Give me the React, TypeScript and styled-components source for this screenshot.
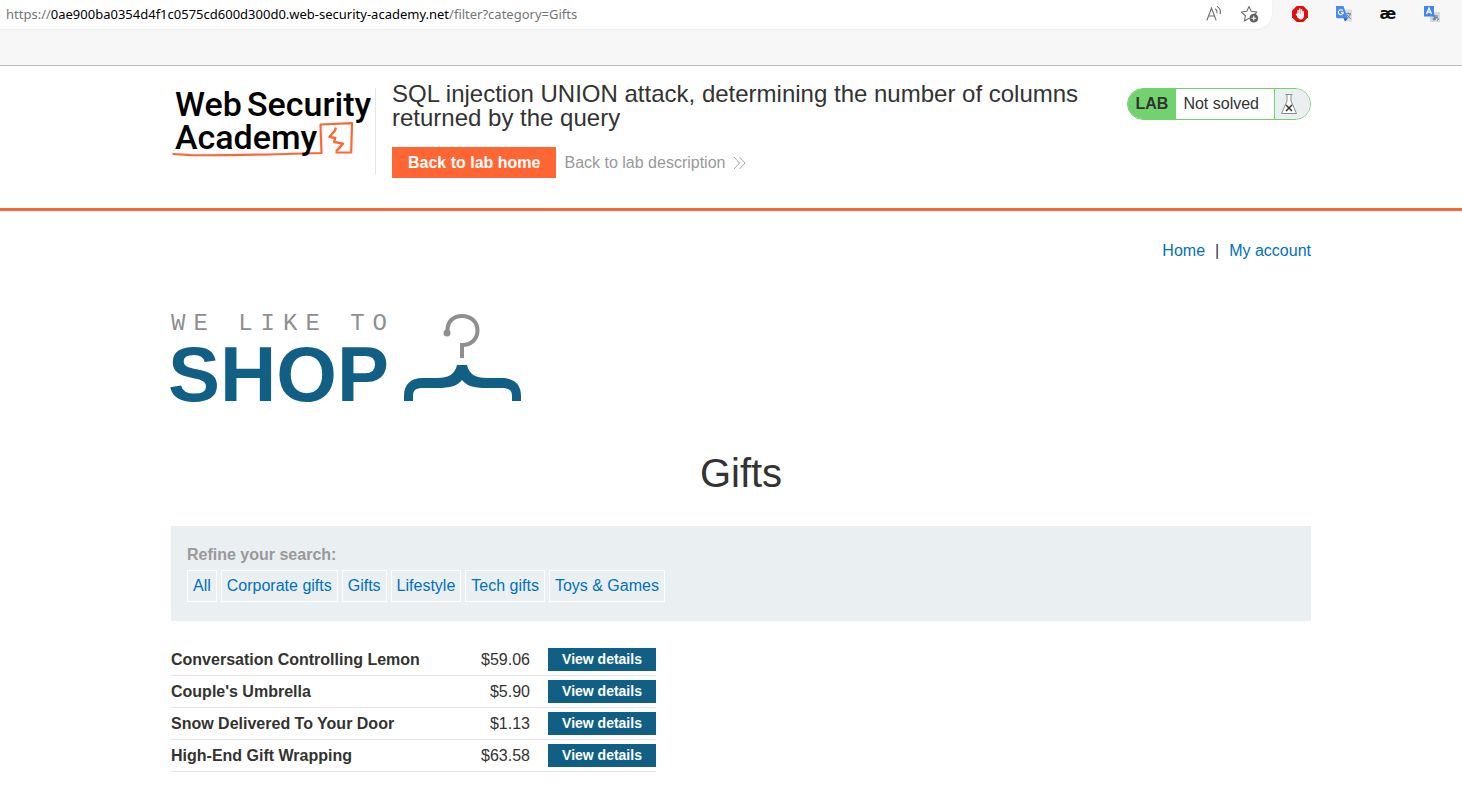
import React from "react";
import styled, { createGlobalStyle } from "styled-components";

const GlobalStyle = createGlobalStyle`
  * { box-sizing: border-box; }
  body {
    margin: 0;
    background: #fff;
    color: #333332;
    font-family: "Liberation Sans", Arial, sans-serif;
    font-size: 16px;
    line-height: 24px;
  }
  a { color: #0071bd; text-decoration: none; }
`;

const Chrome = styled.header`
  height: 66px;
  background: #f7f7f7;
  border-bottom: 1px solid #bdbdbd;
`;

const ChromeRow = styled.div`
  display: flex;
  align-items: stretch;
  height: 29px;
`;

const AddressBar = styled.div`
  flex: 1;
  display: flex;
  align-items: center;
  padding: 0 12px 2px 6px;
  background: #fff;
  border-radius: 0 0 16px 0;
  box-shadow: 0 1px 2px rgba(0, 0, 0, 0.05);
`;

const Url = styled.div`
  flex: 1;
  font-family: "Noto Sans", sans-serif;
  font-size: 13px;
  line-height: 20px;
  color: #757575;
  white-space: nowrap;
`;

const Host = styled.span`
  color: #000;
`;

const IconButton = styled.button`
  display: flex;
  padding: 0;
  border: 0;
  background: none;
`;

const AddressActions = styled.div`
  display: flex;
  gap: 16px;
`;

const Extensions = styled.div`
  display: flex;
  align-items: center;
  gap: 24px;
  padding: 0 20px 2px 18px;
`;

const PageArea = styled.div`
  padding-left: 20px;
`;

const Inner = styled.div`
  max-width: 1140px;
  margin: 0 auto;
`;

const LabHeader = styled(PageArea)`
  border-bottom: 3px solid #ff6633;
`;

const LabHeaderRow = styled(Inner)`
  display: flex;
  align-items: flex-start;
  padding: 16px 0 30px;
`;

const LogoLink = styled.a`
  display: flex;
  margin-top: 6px;
  padding-right: 3px;
  height: 86px;
  border-right: 1px solid #e4e4e4;
`;

const LogoDrawing = styled.svg`
  display: block;
  overflow: visible;
`;

const TitleBlock = styled.div`
  flex: 1;
  padding: 0 48px 0 16px;
`;

const LabTitle = styled.h2`
  margin: 0 0 17px;
  font-size: 24px;
  line-height: 24px;
  font-weight: 400;
`;

const TitleLinks = styled.div`
  display: flex;
  align-items: center;
  gap: 8px;
`;

const HomeButton = styled.a`
  && { color: #fff; }
  padding: 0 16px;
  background: #ff6633;
  font-weight: 700;
  line-height: 31px;
`;

const DescriptionLink = styled.a`
  && { color: #999; }
  display: flex;
  align-items: center;
  gap: 8px;
`;

const LabStatus = styled.div`
  display: flex;
  height: 32px;
  margin-top: 6px;
  overflow: hidden;
  border: 1px solid #72d26e;
  border-radius: 16px;
  line-height: 30px;
`;

const StatusTag = styled.span`
  padding: 0 8px;
  background: #72d26e;
  font-weight: 700;
`;

const StatusText = styled.p`
  margin: 0;
  padding: 0 15px 0 7px;
`;

const StatusIcon = styled.span`
  display: flex;
  align-items: center;
  padding: 0 12px 0 5px;
  border-left: 1px solid #72d26e;
  background: #eaeff2;
`;

const TopNav = styled.nav`
  display: flex;
  justify-content: flex-end;
  gap: 10px;
  padding-top: 28px;
`;

const Banner = styled.div`
  display: flex;
  margin-top: 47px;
`;

const CategoryTitle = styled.h1`
  margin: 43px 0 29px;
  text-align: center;
  font-size: 40px;
  line-height: 48px;
  font-weight: 400;
`;

const Filters = styled.section`
  padding: 17px 16px 19px;
  background: #eaeff2;
`;

const FilterLabel = styled.p`
  margin: 0 0 3px;
  font-weight: 700;
  color: #999;
`;

const FilterList = styled.div`
  display: flex;
  gap: 4px;
`;

const FilterLink = styled.a`
  padding: 0 5px;
  border: 1px solid #fff;
  line-height: 30px;
`;

const Products = styled.table`
  width: 485px;
  margin-top: 23px;
  border-collapse: collapse;
`;

const ProductRow = styled.tr`
  border-bottom: 1px solid #e4e4e4;
`;

const ProductName = styled.th`
  padding: 0;
  text-align: left;
  font-weight: 700;
`;

const ProductPrice = styled.td`
  padding: 0 18px 0 0;
  text-align: right;
`;

const ProductAction = styled.td`
  width: 108px;
  padding: 4px 0;
`;

const DetailsLink = styled.a`
  && { color: #fff; }
  display: block;
  background: #115f84;
  text-align: center;
  font-size: 14px;
  line-height: 23px;
  font-weight: 700;
`;

const categories = ["All", "Corporate gifts", "Gifts", "Lifestyle", "Tech gifts", "Toys & Games"];

const products = [
  { name: "Conversation Controlling Lemon", price: "$59.06" },
  { name: "Couple's Umbrella", price: "$5.90" },
  { name: "Snow Delivered To Your Door", price: "$1.13" },
  { name: "High-End Gift Wrapping", price: "$63.58" },
];

const ReadAloudIcon = () => (
  <svg width="20" height="20" viewBox="0 0 20 20" fill="none" stroke="#6e6e6e" strokeWidth="1.1" strokeLinecap="round">
    <path d="M3 16 L7.5 4 L12 16 M4.6 12 H10.4" />
    <path d="M11.4 5 C12.8 6 13.2 7.4 13 8.8 M13.4 2.6 C16 4.4 16.8 7.2 16.2 9.6" />
  </svg>
);

const FavoriteIcon = () => (
  <svg width="20" height="20" viewBox="0 0 20 20" fill="none">
    <path
      d="M9 2.5 L11.2 7.2 L16.8 8 L15 9.8 M9 2.5 L6.8 7.2 L1.4 8 L5.4 11.8 L4.4 17 L8.6 14.6"
      stroke="#6e6e6e" strokeWidth="1.1" strokeLinejoin="round" strokeLinecap="round"
    />
    <circle cx="13.8" cy="14.2" r="4.4" fill="#5f5f5f" />
    <path d="M13.8 11.8 V16.6 M11.4 14.2 H16.2" stroke="#fff" strokeWidth="1.1" />
  </svg>
);

const BlockerIcon = () => (
  <svg width="20" height="20" viewBox="0 0 20 20">
    <path d="M6.7 2 H13.3 L18 6.7 V13.3 L13.3 18 H6.7 L2 13.3 V6.7 Z" fill="#e40d0d" />
    <g stroke="#fff" strokeWidth="1.4" strokeLinecap="round" fill="none">
      <path d="M8 6.4 V11 M9.8 5 V11 M11.6 5.8 V11 M13.2 7.6 V12 M6.4 10.2 L8.4 13" />
    </g>
    <path d="M7.6 9.6 H13.8 V12 C13.8 14.6 12.4 15.4 10.8 15.4 C9 15.4 8 14.4 7.2 12.6 Z" fill="#fff" />
  </svg>
);

const GoogleTranslateIcon = () => (
  <svg width="20" height="20" viewBox="0 0 20 20">
    <path d="M8 5.5 H18 V17.5 H12 Z" fill="#dadce0" />
    <path d="M12 9.8 H17 M14.4 8.6 V9.8 M16.3 9.8 C15.8 12 14.2 13.5 12.8 14.3 M13.4 11 C14 12.6 15.3 13.8 16.6 14.6" stroke="#5f7f8f" fill="none" />
    <path d="M2 2 H9.5 L13.8 14.2 H3.4 C2.5 14.2 2 13.6 2 12.8 Z" fill="#4a8af4" />
    <path d="M9.5 14.2 H13.8 L11 17.6 Z" fill="#3048b8" />
    <path d="M8.8 6.9 A2.4 2.4 0 1 0 9.2 8.6 H7" stroke="#fff" strokeWidth="1.1" fill="none" />
  </svg>
);

const LigatureMark = styled.span`
  width: 20px;
  text-align: center;
  font-family: "DejaVu Sans", sans-serif;
  font-size: 16px;
  line-height: 20px;
  font-weight: 700;
  color: #111;
`;

const TranslatorIcon = () => (
  <svg width="20" height="20" viewBox="0 0 20 20">
    <rect x="8" y="8" width="10" height="10" fill="#d7dadd" />
    <path d="M10.5 12 H16 M12.8 10.6 V15.6 M15 12.8 C14 15.4 12 16.6 11 15.6 C10.2 14.4 13 13 15.4 13.8 C17 14.6 16.4 16 15 16.6" stroke="#5c7e93" fill="none" />
    <rect x="2" y="2" width="10" height="10.5" fill="#3f86f4" />
    <path d="M4.5 10 L7 4.2 L9.5 10 M5.4 8.2 H8.6" stroke="#fff" strokeWidth="1.3" fill="none" />
  </svg>
);

const AcademyLogo = () => (
  <LogoDrawing width="201" height="86" viewBox="0 0 201 86" role="img" aria-label="Web Security Academy">
    <g fill="none" stroke="#ff6633" strokeLinejoin="round">
      <path d="M1.5 66 L20 67.2 C60 67.6 100 66.5 150.5 65 L149.5 36.5 L181 35.2 L180.2 64.5 L164.5 64.5" strokeWidth="2.2" />
      <path d="M164.8 39.5 L164 42.5 L158.5 48.8 L164.2 50 L163.2 54 L172 55.6 L165 63.5" strokeWidth="2.4" />
    </g>
    <g fill="#000" fontFamily="Roboto, sans-serif" fontSize="34" fontWeight="500">
      <text x="4" y="28">Web</text>
      <text x="76" y="28">Security</text>
      <text x="4" y="61">Academy</text>
    </g>
  </LogoDrawing>
);

const DoubleChevron = () => (
  <svg width="14" height="14" viewBox="0 0 14 14" fill="none" stroke="#a5a5a5">
    <path d="M1 1 L6.5 7 L1 13 M6.5 1 L12 7 L6.5 13" />
  </svg>
);

const FlaskIcon = () => (
  <svg width="18" height="22" viewBox="0 0 18 22" fill="none">
    <path d="M5.5 1.5 H12.5 M7 1.5 V8 L1.5 20.5 H16.5 L11 8 V1.5" fill="#fff" stroke="#8c8c8c" />
    <path d="M6 12 L12 18 M12 12 L6 18" stroke="#333332" strokeWidth="1.5" />
  </svg>
);

const ShopLogo = () => (
  <LogoDrawing width="352" height="96" viewBox="0 0 352 96" role="img" aria-label="We like to shop">
    <text x="0" y="20" fill="#8f8f8f" fontFamily="Liberation Mono, monospace" fontSize="24" letterSpacing="8">WE LIKE TO</text>
    <text x="-3" y="91" fill="#115f84" fontFamily="Liberation Sans, sans-serif" fontSize="78" fontWeight="700">SHOP</text>
    <g fill="none" stroke="#8f8f8f" strokeWidth="4">
      <path d="M276.5 21 C276 11 283 6 291 6 C300 6 306.5 12 306.5 20.5 C306.5 29 300 35 291 35 V48" />
    </g>
    <circle cx="276" cy="23" r="3.5" fill="#8f8f8f" />
    <path
      d="M286 55 H296 C298 64 304 68 316 68 H330 C344 68 350 75 350 86 V91 H341 V86 C341 80 338 78 330 78 H316 C302 78 296 76 291 70 C286 76 280 78 266 78 H252 C245 78 242 80 242 86 V91 H233 V86 C233 75 239 68 252 68 H266 C278 68 284 64 286 55 Z"
      fill="#115f84"
    />
  </LogoDrawing>
);

export default function App() {
  return (
    <>
      <GlobalStyle />
      <Chrome>
        <ChromeRow>
          <AddressBar>
            <Url>
              https://<Host>0ae900ba0354d4f1c0575cd600d300d0.web-security-academy.net</Host>/filter?category=Gifts
            </Url>
            <AddressActions>
              <IconButton aria-label="Read aloud"><ReadAloudIcon /></IconButton>
              <IconButton aria-label="Add to favorites"><FavoriteIcon /></IconButton>
            </AddressActions>
          </AddressBar>
          <Extensions>
            <IconButton aria-label="Ad blocker"><BlockerIcon /></IconButton>
            <IconButton aria-label="Translate page"><GoogleTranslateIcon /></IconButton>
            <IconButton aria-label="Dictionary"><LigatureMark>æ</LigatureMark></IconButton>
            <IconButton aria-label="Translator"><TranslatorIcon /></IconButton>
          </Extensions>
        </ChromeRow>
      </Chrome>
      <LabHeader>
        <LabHeaderRow>
          <LogoLink href="#" aria-label="Web Security Academy"><AcademyLogo /></LogoLink>
          <TitleBlock>
            <LabTitle>SQL injection UNION attack, determining the number of columns returned by the query</LabTitle>
            <TitleLinks>
              <HomeButton href="#">Back to lab home</HomeButton>
              <DescriptionLink href="#">Back to lab description <DoubleChevron /></DescriptionLink>
            </TitleLinks>
          </TitleBlock>
          <LabStatus>
            <StatusTag>LAB</StatusTag>
            <StatusText>Not solved</StatusText>
            <StatusIcon><FlaskIcon /></StatusIcon>
          </LabStatus>
        </LabHeaderRow>
      </LabHeader>
      <PageArea>
        <Inner as="main">
          <TopNav>
            <a href="#">Home</a>
            <span>|</span>
            <a href="#">My account</a>
          </TopNav>
          <Banner><ShopLogo /></Banner>
          <CategoryTitle>Gifts</CategoryTitle>
          <Filters>
            <FilterLabel>Refine your search:</FilterLabel>
            <FilterList>
              {categories.map((c) => <FilterLink key={c} href="#">{c}</FilterLink>)}
            </FilterList>
          </Filters>
          <Products>
            <tbody>
              {products.map((p) => (
                <ProductRow key={p.name}>
                  <ProductName scope="row">{p.name}</ProductName>
                  <ProductPrice>{p.price}</ProductPrice>
                  <ProductAction><DetailsLink href="#">View details</DetailsLink></ProductAction>
                </ProductRow>
              ))}
            </tbody>
          </Products>
        </Inner>
      </PageArea>
    </>
  );
}
